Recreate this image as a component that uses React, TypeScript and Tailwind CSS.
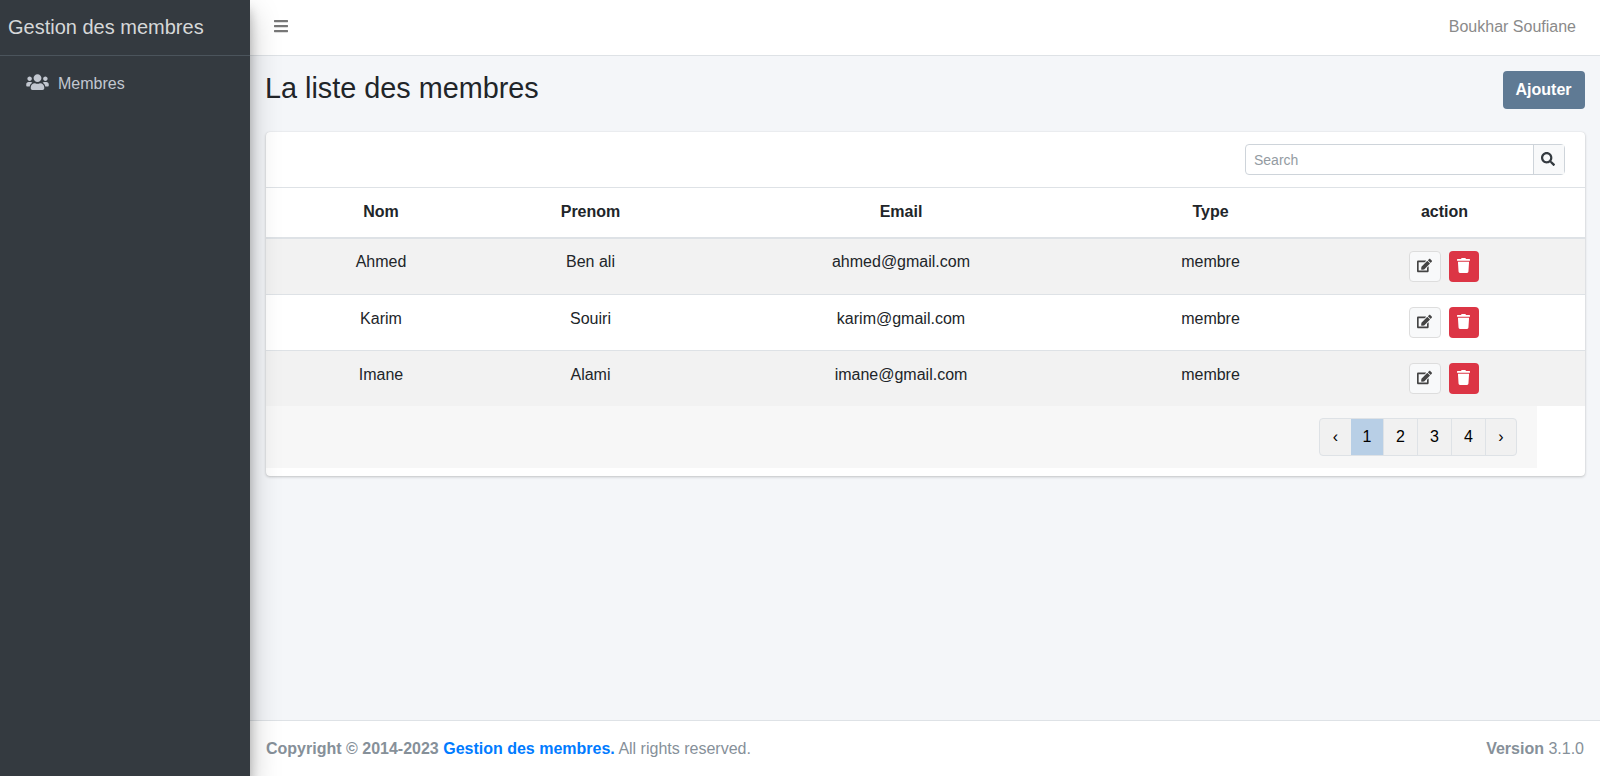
import { FaBars, FaEdit, FaSearch, FaTrash, FaUsers } from 'react-icons/fa';

const members = [
  { nom: 'Ahmed', prenom: 'Ben ali', email: 'ahmed@gmail.com', type: 'membre' },
  { nom: 'Karim', prenom: 'Souiri', email: 'karim@gmail.com', type: 'membre' },
  { nom: 'Imane', prenom: 'Alami', email: 'imane@gmail.com', type: 'membre' },
];

const pages = [
  { label: '‹', className: 'w-[31px]' },
  { label: '1', className: 'w-[32px] bg-[#b8cfe6]' },
  { label: '2', className: 'w-[34px] border-l border-[#dee2e6]' },
  { label: '3', className: 'w-[34px] border-l border-[#dee2e6]' },
  { label: '4', className: 'w-[34px] border-l border-[#dee2e6]' },
  { label: '›', className: 'w-[31px] border-l border-[#dee2e6]' },
];

function Sidebar() {
  return (
    <aside className="relative z-10 w-[250px] shrink-0 bg-[#343a40] shadow-[0_14px_28px_rgba(0,0,0,0.25),0_10px_10px_rgba(0,0,0,0.22)]">
      <div className="h-[56px] border-b border-[#4b545c] pl-2 pt-[12px] text-[20px] leading-[30px] text-[#d6d8d9]">
        Gestion des membres
      </div>
      <div className="flex items-center pl-[26px] pt-[16px] text-[#c2c7d0]">
        <FaUsers className="mb-[4px] h-[18px] w-[23px]" />
        <span className="ml-[9px] leading-6">Membres</span>
      </div>
    </aside>
  );
}

function Pagination() {
  return (
    <div className="flex h-[38px] rounded border border-[#dee2e6] bg-[#f1f1f1]">
      {pages.map(page => (
        <div key={page.label} className={`flex items-center justify-center text-black ${page.className}`}>
          {page.label}
        </div>
      ))}
    </div>
  );
}

function MembersTable() {
  return (
    <table className="w-full table-fixed border-collapse text-center text-[#212529]">
      <colgroup>
        <col className="w-[230px]" />
        <col className="w-[189px]" />
        <col className="w-[432px]" />
        <col className="w-[187px]" />
        <col />
      </colgroup>
      <thead>
        <tr className="border-y border-[#dee2e6]">
          <th className="h-[50px] border-b-2 border-[#dee2e6] font-bold">Nom</th>
          <th className="border-b-2 border-[#dee2e6] font-bold">Prenom</th>
          <th className="border-b-2 border-[#dee2e6] font-bold">Email</th>
          <th className="border-b-2 border-[#dee2e6] font-bold">Type</th>
          <th className="relative border-b-2 border-[#dee2e6] font-bold">
            action
            {/* the thicker rule under the last column only */}
            <div className="absolute bottom-[-2px] right-0 h-px w-[269px] bg-[#dee2e6]" />
          </th>
        </tr>
      </thead>
      <tbody>
        {members.map((member, index) => {
          const cell = `px-3 pb-3 align-top leading-6 ${index === 0 ? 'pt-[11px]' : 'pt-3'}`;
          return (
            <tr key={member.email} className={`border-t border-[#dee2e6] ${index % 2 === 0 ? 'bg-[#f2f2f2]' : 'bg-white'}`}>
              <td className={cell}>{member.nom}</td>
              <td className={cell}>{member.prenom}</td>
              <td className={cell}>{member.email}</td>
              <td className={cell}>{member.type}</td>
              <td className="py-3 pl-3 pr-[14px] align-top">
                <div className="flex justify-center gap-2">
                  <button className="flex h-[31px] w-[32px] items-center justify-center rounded border border-[#ddd] bg-[#f8f9fa] text-[#444]">
                    <FaEdit className="mb-px h-[15px] w-[15px]" />
                  </button>
                  <button className="flex h-[31px] w-[30px] items-center justify-center rounded bg-[#dc3545] text-white">
                    <FaTrash className="mb-[2px] h-[15px] w-[13px]" />
                  </button>
                </div>
              </td>
            </tr>
          );
        })}
      </tbody>
    </table>
  );
}

export default function App() {
  return (
    <div className="flex h-[776px] overflow-hidden bg-[#f4f6f9] font-['Liberation_Sans',Arial,sans-serif] text-base">
      <Sidebar />
      <div className="flex min-w-0 flex-1 flex-col">
        <header className="flex h-[56px] shrink-0 items-center justify-between border-b border-[#dee2e6] bg-white pb-[2px] pl-[24px] pr-6 text-[#8a8a8a]">
          <FaBars className="mb-[2px] h-[16px] w-[14px] text-[#777]" />
          <span>Boukhar Soufiane</span>
        </header>

        <main className="flex-1 pl-4 pr-[15px]">
          <div className="flex items-start justify-between pb-[23px] pt-[15px]">
            <h1 className="-ml-px text-[28.8px] leading-[34px] text-[#212529]">La liste des membres</h1>
            <button className="h-[38px] w-[82px] rounded bg-[#5f7a94] pr-px font-bold text-white">Ajouter</button>
          </div>

          <section className="overflow-hidden rounded bg-white pb-2 shadow-[0_0_1px_rgba(0,0,0,0.125),0_1px_3px_rgba(0,0,0,0.2)]">
            <div className="flex h-[55px] items-start justify-end pr-5 pt-3">
              <div className="flex h-[31px] w-[320px] rounded border border-[#ced4da]">
                <div className="flex-1 px-2 text-sm leading-[30px] text-[#939ba2]">Search</div>
                <div className="flex w-[31px] items-center justify-center border-l border-[#ced4da] bg-[#f8f9fa] pr-[2px] text-[#343a40]">
                  <FaSearch className="mb-px h-[14px] w-[14px]" />
                </div>
              </div>
            </div>
            <MembersTable />
            <div className="flex h-[62px] w-[1271px] justify-end bg-[#f7f7f7] pr-5 pt-3">
              <Pagination />
            </div>
          </section>
        </main>

        <footer className="flex h-[56px] shrink-0 items-center justify-between border-t border-[#dee2e6] bg-white px-4 text-[#869099]">
          <div>
            <strong>Copyright © 2014-2023 </strong>
            <strong className="text-[#007bff]">Gestion des membres.</strong> All rights reserved.
          </div>
          <div>
            <strong>Version</strong> 3.1.0
          </div>
        </footer>
      </div>
    </div>
  );
}
